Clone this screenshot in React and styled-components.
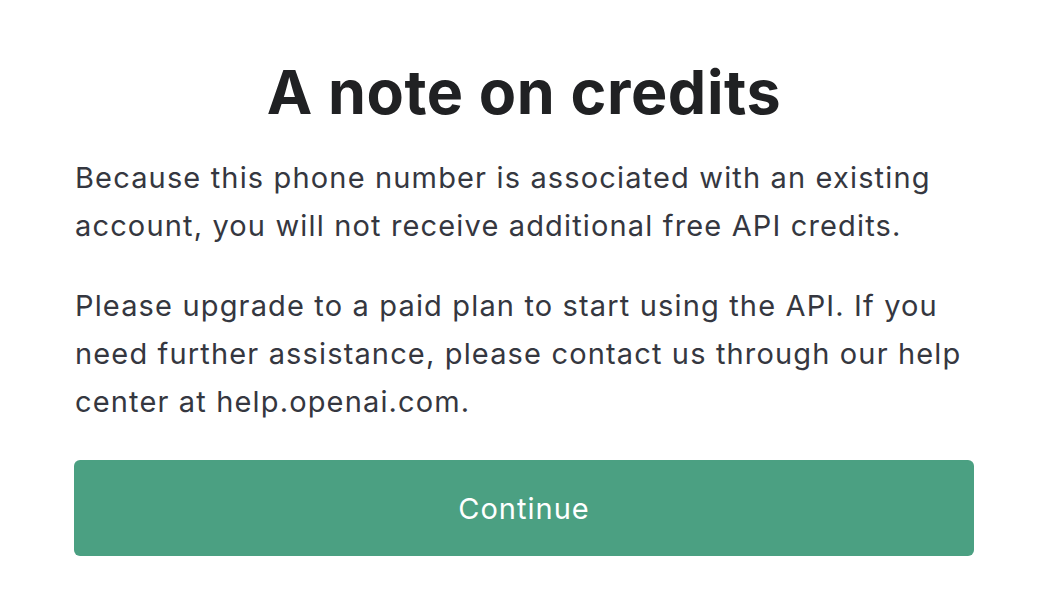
import React from 'react';
import styled, { createGlobalStyle } from 'styled-components';

const GlobalStyle = createGlobalStyle`
  html, body { margin: 0; padding: 0; background: #ffffff; }
  body { font-family: Inter, "Noto Sans", sans-serif; -webkit-font-smoothing: antialiased; }
`;

const Page = styled.div`
  width: 1060px;
  height: 590px;
  padding: 56px 0 0 74px;
  box-sizing: border-box;
`;

const Card = styled.div`
  width: 900px;
  display: flex;
  flex-direction: column;
`;

const Title = styled.h1`
  margin: 0 0 26px;
  text-align: center;
  font-size: 61px;
  line-height: 72px;
  font-weight: 700;
  color: #202123;
  letter-spacing: 0.6px;
`;

const Text = styled.p`
  margin: 0 0 ${p => p.$gap}px;
  padding-left: 1px;
  font-size: 29px;
  line-height: 48px;
  color: #353740;
  letter-spacing: 1.15px;
`;

const Button = styled.button`
  height: 96px;
  width: 100%;
  border: none;
  border-radius: 6px;
  background: #4ba082;
  color: #ffffff;
  font-family: Inter, "Noto Sans", sans-serif;
  font-size: 29px;
  letter-spacing: 1px;
  cursor: pointer;
`;

export default function App() {
  return (
    <>
      <GlobalStyle />
      <Page>
        <Card>
          <Title>A note on credits</Title>
          <Text $gap={32}>
            Because this phone number is associated with an existing account, you will not receive additional free API credits.
          </Text>
          <Text $gap={34}>
            Please upgrade to a paid plan to start using the API. If you need further assistance, please contact us through our help center at help.openai.com.
          </Text>
          <Button>Continue</Button>
        </Card>
      </Page>
    </>
  );
}
